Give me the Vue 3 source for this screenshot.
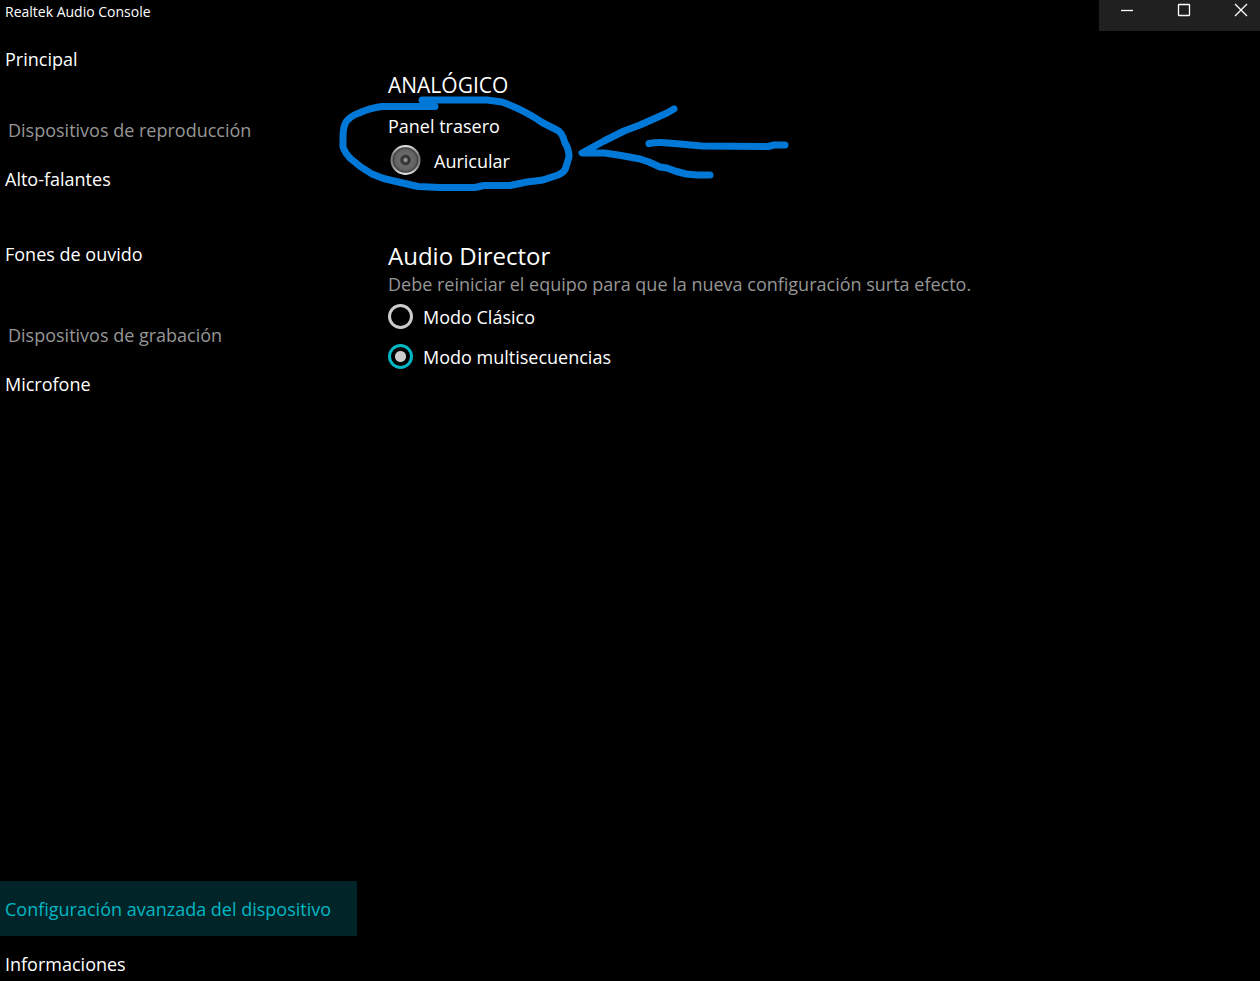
<script setup>
import { ref } from 'vue'

const mode = ref('multi')
const modes = [
  { value: 'classic', label: 'Modo Clásico' },
  { value: 'multi', label: 'Modo multisecuencias' },
]
</script>

<template>
  <div class="window">
    <header class="titlebar">
      <span class="title">Realtek Audio Console</span>
      <div class="controls">
        <button type="button" aria-label="Minimizar">
          <svg width="14" height="14" viewBox="0 0 14 14"><path d="M1 7.5H13" /></svg>
        </button>
        <button type="button" aria-label="Maximizar">
          <svg width="14" height="14" viewBox="0 0 14 14"><rect x="1.5" y="1.5" width="11" height="11" rx="0.5" /></svg>
        </button>
        <button type="button" aria-label="Cerrar">
          <svg width="14" height="14" viewBox="0 0 14 14"><path d="M1 1L13 13M13 1L1 13" /></svg>
        </button>
      </div>
    </header>

    <div class="body">
      <nav class="sidebar">
        <a class="item" href="#principal">Principal</a>
        <section class="group first">
          <h2>Dispositivos de reproducción</h2>
          <a class="item" href="#altofalantes">Alto-falantes</a>
          <a class="item" href="#fones">Fones de ouvido</a>
        </section>
        <section class="group">
          <h2>Dispositivos de grabación</h2>
          <a class="item" href="#microfone">Microfone</a>
        </section>
        <div class="bottom">
          <a class="item active" href="#avanzada" aria-current="page">Configuración avanzada del dispositivo</a>
          <a class="item last" href="#informaciones">Informaciones</a>
        </div>
      </nav>

      <main class="content">
        <section class="analog">
          <h1>ANALÓGICO</h1>
          <h3>Panel trasero</h3>
          <div class="jack">
            <svg width="32" height="32" viewBox="0 0 32 32" aria-hidden="true">
              <defs>
                <linearGradient id="rim" x1="0" y1="0" x2="0" y2="1">
                  <stop offset="0" stop-color="#e6e6e6" />
                  <stop offset="0.35" stop-color="#777" />
                  <stop offset="0.7" stop-color="#888" />
                  <stop offset="1" stop-color="#f0f0f0" />
                </linearGradient>
                <radialGradient id="face" cx="0.5" cy="0.5" r="0.5">
                  <stop offset="0" stop-color="#999" />
                  <stop offset="0.12" stop-color="#888" />
                  <stop offset="0.22" stop-color="#2c2c2c" />
                  <stop offset="0.34" stop-color="#3c3c3c" />
                  <stop offset="0.46" stop-color="#6c6c6c" />
                  <stop offset="0.78" stop-color="#606060" />
                  <stop offset="0.9" stop-color="#404040" />
                  <stop offset="1" stop-color="#404040" stop-opacity="0" />
                </radialGradient>
              </defs>
              <circle cx="15.500" cy="16" r="15" fill="url(#rim)" />
              <circle cx="15.500" cy="16" r="13.500" fill="url(#face)" />
            </svg>
            <span>Auricular</span>
          </div>
        </section>

        <section class="director">
          <h2>Audio Director</h2>
          <p>Debe reiniciar el equipo para que la nueva configuración surta efecto.</p>
          <label v-for="m in modes" :key="m.value" class="option">
            <input v-model="mode" type="radio" name="mode" :value="m.value" />
            <span>{{ m.label }}</span>
          </label>
        </section>
      </main>
    </div>

    <svg class="ink" width="460" height="108" viewBox="336 90 460 108" aria-hidden="true">
      <path d="M435 106.500H382Q370 108 359 113Q348 117 345 124Q343 129 343 137V147Q345 153 351 159Q361 168 372 174Q383 179 394 181L418 186.500L440 187.500H475L484 185.500H510L527 182L543 180L558 175Q565 172 566 167L569 157Q569 149 565 143Q562 132 557 130L543 123Q524 110 502 102L487 100H422" />
      <path d="M674 109L667 113L640 125L624 131L604 141L582 153H605L621 155.500L640 159L649 162L660 167L667 168L675 171L686 174L697 175H710" />
      <path d="M649 143.500Q657 142 668 143L680 144L702 146L768 146.500L774 145H785" />
    </svg>
  </div>
</template>

<style>
body {
  background: #000;
}
</style>

<style scoped>
.window {
  position: relative;
  display: flex;
  flex-direction: column;
  min-height: 100vh;
  background: #000;
  color: #fff;
  font-family: "Segoe UI", "Open Sans", "Noto Sans", sans-serif;
  font-size: 18px;
  line-height: 27px;
}
h1, h2, h3, p {
  margin: 0;
  font-weight: 400;
}
.titlebar {
  display: flex;
  justify-content: space-between;
  height: 31px;
}
.title {
  padding-left: 5px;
  font-size: 14px;
  line-height: 24px;
}
.controls {
  display: flex;
  width: 161px;
  overflow: hidden;
  background: #202020;
}
.controls button {
  display: flex;
  flex: 0 0 57px;
  justify-content: center;
  padding: 3px 2px 0 0;
  border: 0;
  background: none;
}
.controls svg {
  fill: none;
  stroke: #fff;
  stroke-width: 1.3;
}
.body {
  display: flex;
  flex: 1;
}
.sidebar {
  display: flex;
  flex: 0 0 357px;
  flex-direction: column;
}
.item {
  display: block;
  padding: 15px 5px 13px;
  color: #fff;
  text-decoration: none;
}
.group {
  display: flex;
  flex-direction: column;
  padding-top: 41px;
}
.group.first {
  padding-top: 31px;
}
.group h2 {
  padding: 0 8px 7px;
  color: #969696;
  font-size: 18px;
}
.group .item + .item {
  margin-top: 20px;
}
.bottom {
  margin-top: auto;
}
.active {
  background: #002428;
  color: #00b7c3;
}
.last {
  padding-bottom: 3px;
}
.content {
  flex: 1;
  padding: 41px 31px 0;
}
h1 {
  font-size: 21px;
}
h3 {
  margin-top: 14px;
  font-size: 18px;
}
.jack {
  display: flex;
  align-items: center;
  gap: 12px;
  margin: 4px 0 0 2px;
}
.jack span,
.option span {
  padding-top: 2px;
}
.director {
  margin-top: 65px;
}
.director h2 {
  font-size: 24px;
  line-height: 30px;
}
.director p {
  margin-bottom: 3px;
  color: #969696;
}
.option {
  display: flex;
  align-items: center;
  gap: 10px;
  width: max-content;
  height: 30px;
  margin-bottom: 10px;
}
.option input {
  appearance: none;
  width: 25px;
  height: 25px;
  margin: 0;
  border: 3px solid #ccc;
  border-radius: 50%;
}
.option input:checked {
  border-color: #00b7c3;
  background: radial-gradient(circle, #ccc 5px, transparent 6px);
}
.ink {
  position: absolute;
  top: 90px;
  left: 336px;
  fill: none;
  stroke: #0078d7;
  stroke-width: 7;
  stroke-linecap: round;
  stroke-linejoin: round;
  pointer-events: none;
}
</style>
